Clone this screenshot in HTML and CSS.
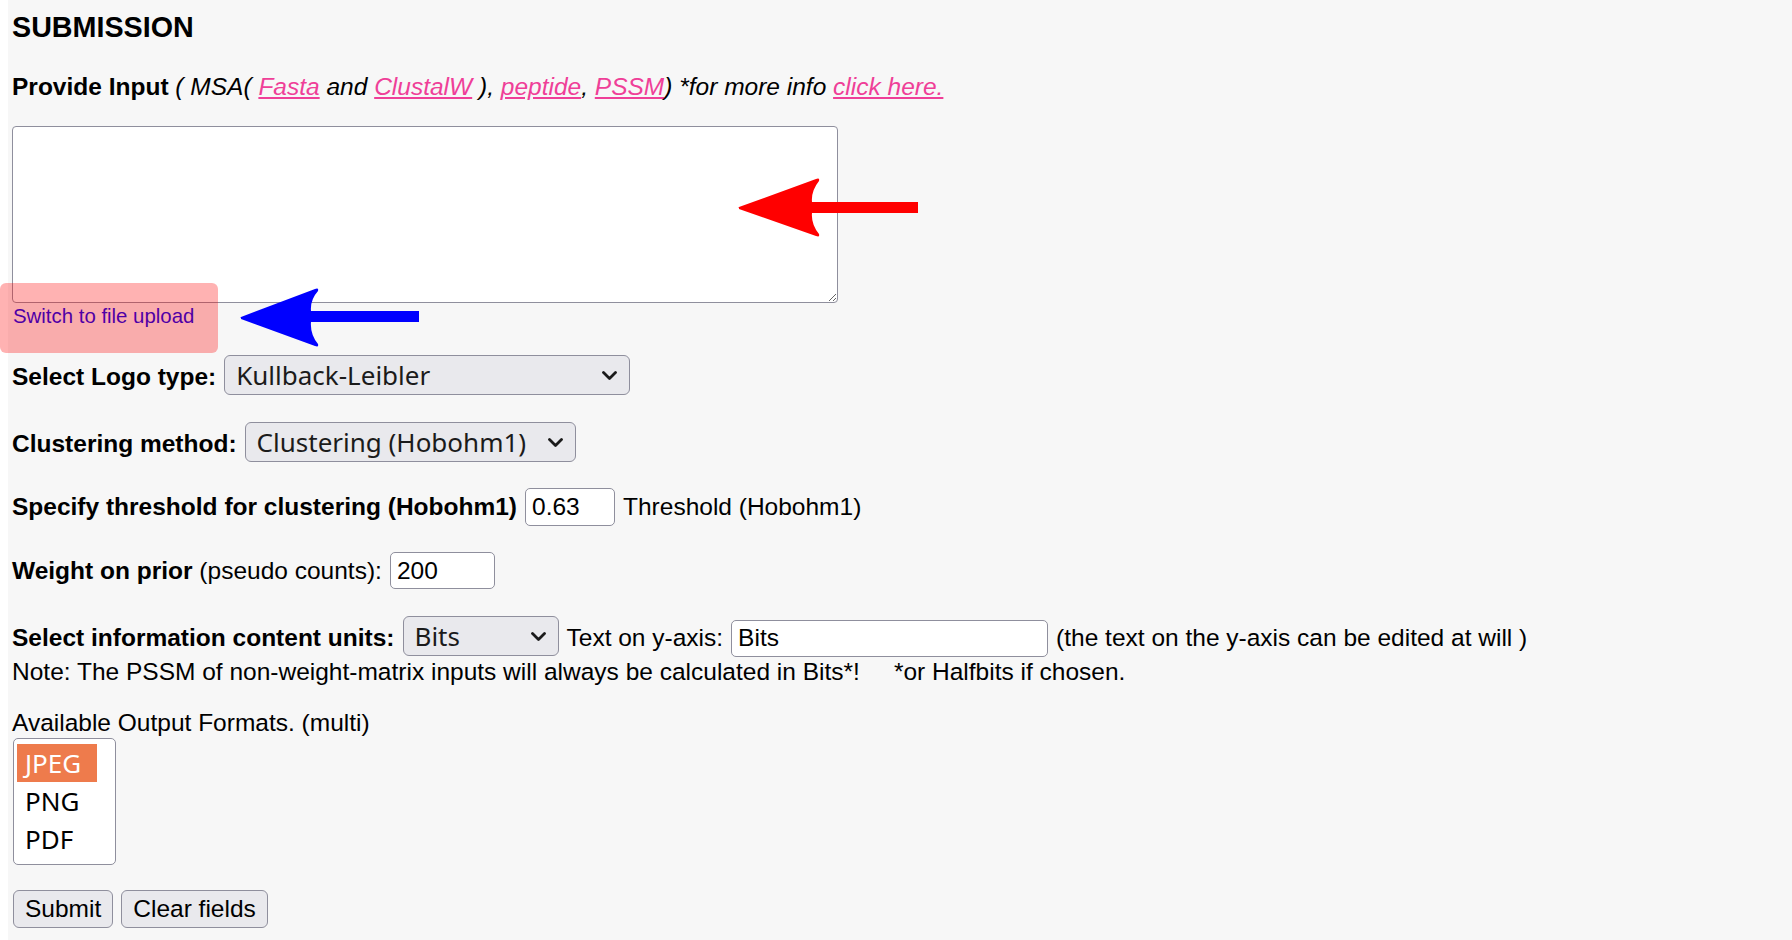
FILE: index.html
```html
<!DOCTYPE html>
<html lang="en">
<head>
    <meta charset="UTF-8">
    <title>Submission</title>
    <link rel="stylesheet" href="styles.css">
</head>
<body>
<div class="page">
    <h3 class="title">SUBMISSION</h3>
    <p class="intro"><b>Provide Input</b> <i>( MSA( <a href="#">Fasta</a> and <a href="#">ClustalW</a> ), <a href="#">peptide</a>, <a href="#">PSSM</a>) *for more info <a href="#">click here.</a></i></p>
    <textarea class="seq" name="seq"></textarea>
    <a class="switch" href="#">Switch to file upload</a>

    <div class="row row-logo">
        <b>Select Logo type:</b>
        <span class="pick">
            <select class="logo-type">
                <option>Kullback-Leibler</option>
                <option>Shannon</option>
                <option>Weighted Kullback-Leibler</option>
            </select>
            <svg class="chev" viewBox="0 0 15 9"><path d="M1.5 1.5 L7.5 7.5 L13.5 1.5"/></svg>
        </span>
    </div>

    <div class="row row-cluster">
        <b>Clustering method:</b>
        <span class="pick">
            <select class="cluster">
                <option>Clustering (Hobohm1)</option>
                <option>Heuristics</option>
                <option>No clustering</option>
            </select>
            <svg class="chev" viewBox="0 0 15 9"><path d="M1.5 1.5 L7.5 7.5 L13.5 1.5"/></svg>
        </span>
    </div>

    <div class="row row-threshold">
        <b>Specify threshold for clustering (Hobohm1)</b>
        <input class="field field-threshold" type="text" value="0.63">
        <span>Threshold (Hobohm1)</span>
    </div>

    <div class="row row-weight">
        <span><b>Weight on prior</b> (pseudo counts):</span>
        <input class="field field-weight" type="text" value="200">
    </div>

    <div class="row row-units">
        <b>Select information content units:</b>
        <span class="pick">
            <select class="units">
                <option>Bits</option>
                <option>Halfbits</option>
            </select>
            <svg class="chev" viewBox="0 0 15 9"><path d="M1.5 1.5 L7.5 7.5 L13.5 1.5"/></svg>
        </span>
        <span>Text on y-axis:</span>
        <input class="field field-axis" type="text" value="Bits">
        <span>(the text on the y-axis can be edited at will )</span>
    </div>
    <div class="note">Note: The PSSM of non-weight-matrix inputs will always be calculated in Bits*!&nbsp;&nbsp;&nbsp;&nbsp; *or Halfbits if chosen.</div>

    <div class="formats-label">Available Output Formats. (multi)</div>
    <select class="formats" multiple size="3">
        <option selected>JPEG</option>
        <option>PNG</option>
        <option>PDF</option>
    </select>

    <div class="buttons">
        <button type="submit">Submit</button>
        <button type="reset">Clear fields</button>
    </div>
</div>

<!-- annotations drawn over the form -->
<div class="highlight"></div>
<svg class="arrow arrow-red" viewBox="0 0 180 59">
    <path d="M1 30 Q0 29.5 1 29 L78 1 Q82 -0.5 81 3 Q73 13 74 24 L180 24 L180 35 L74 35 Q73 46 81 56 Q82 59.5 78 58 L1 31 Z"/>
</svg>
<svg class="arrow arrow-blue" viewBox="0 0 179 59">
    <path d="M1 30 Q0 29.5 1 29 L75 1 Q79 -0.5 78 3 Q70 12 71 23 L179 23 L179 34 L71 34 Q70 46 78 56 Q79 59.5 75 58 L1 31 Z"/>
</svg>
</body>
</html>
```

FILE: styles.css
```css
body{
    margin: 0;
    background: #fff;
    color: #000;
    font-family: "Liberation Sans", Arial, sans-serif;
    font-size: 24.5px;
    position: relative;
}
.page{
    margin-left: 8px;
    padding: 11px 0 14px 4px;
    background: #f7f7f7;
    min-height: 915px;
    box-sizing: border-box;
}
.title{
    margin: 0;
    font-size: 28.7px;
    font-weight: bold;
}
.intro{
    margin: 29px 0 0 0;
}
.intro a{
    color: #ef3f98;
}
textarea.seq{
    display: block;
    margin-top: 25px;
    width: 826px;
    height: 177px;
    box-sizing: border-box;
    border: 1.5px solid #8f8f9d;
    border-radius: 4px;
    background: #fff;
    resize: both;
}
.switch{
    display: block;
    width: fit-content;
    margin-top: 0;
    color: #0000ee;
    text-decoration: none;
    font-size: 20.4px;
    line-height: 27px;
    padding-left: 1px;
}
.row{
    display: flex;
    align-items: baseline;
    gap: 8px;
    white-space: nowrap;
}
.row-logo{
    margin-top: 25px;
}
.row-cluster{
    margin-top: 27px;
}
.row-threshold{
    margin-top: 26px;
}
.row-weight{
    margin-top: 26px;
}
.row-units{
    margin-top: 27px;
}
.pick{
    position: relative;
    display: inline-flex;
}
.pick select{
    -webkit-appearance: none;
    appearance: none;
    height: 40px;
    box-sizing: border-box;
    padding: 0 34px 0 11px;
    border: 1.5px solid #8f8f9d;
    border-radius: 6px;
    background: #e9e9ed;
    color: #1b1b1b;
    font-family: "Noto Sans", sans-serif;
    font-size: 26px;
}
.logo-type{
    width: 406px;
}
.cluster{
    width: 331px;
}
.units{
    width: 156px;
}
.chev{
    position: absolute;
    right: 13px;
    top: 16px;
    width: 15px;
    height: 9px;
    pointer-events: none;
}
.chev path{
    fill: none;
    stroke: #1b1b1b;
    stroke-width: 2.8;
    stroke-linecap: round;
    stroke-linejoin: round;
}
.field{
    height: 38px;
    box-sizing: border-box;
    padding: 0 6px;
    border: 1.5px solid #8f8f9d;
    border-radius: 5px;
    background: #fff;
    color: #000;
    font-family: "Liberation Sans", Arial, sans-serif;
    font-size: 24.5px;
}
.field-threshold{
    width: 90px;
}
.field-weight{
    width: 105px;
    height: 37px;
}
.field-axis{
    width: 317px;
    height: 37px;
}
.note{
    margin-top: 1px;
}
.formats-label{
    margin-top: 23px;
}
select.formats{
    display: block;
    margin: 1px 0 0 1px;
    width: 103px;
    height: 127px;
    box-sizing: border-box;
    padding: 5px 18px 0 3px;
    border: 1.5px solid #8f8f9d;
    border-radius: 5px;
    background: #fff;
    overflow: hidden;
    font-family: "Noto Sans", sans-serif;
    font-size: 26px;
    color: #000;
}
select.formats option{
    padding: 1px 8px;
    line-height: 35px;
}
select.formats option:checked{
    background: #ee7b4c linear-gradient(#ee7b4c, #ee7b4c);
    color: #fff;
}
.buttons{
    margin-top: 25px;
    display: flex;
    gap: 8px;
    padding-left: 1px;
}
.buttons button{
    height: 38px;
    padding: 0 11px;
    border: 1.5px solid #8f8f9d;
    border-radius: 6px;
    background: #e9e9ed;
    color: #000;
    font-family: "Liberation Sans", Arial, sans-serif;
    font-size: 24.5px;
}
.highlight{
    position: absolute;
    left: 0;
    top: 283px;
    width: 218px;
    height: 70px;
    border-radius: 6px;
    background: rgba(255,0,0,0.3);
}
.arrow{
    position: absolute;
}
.arrow-red{
    left: 738px;
    top: 178px;
    width: 180px;
    height: 59px;
    fill: #ff0000;
}
.arrow-blue{
    left: 240px;
    top: 288px;
    width: 179px;
    height: 59px;
    fill: #0000ff;
}
```
